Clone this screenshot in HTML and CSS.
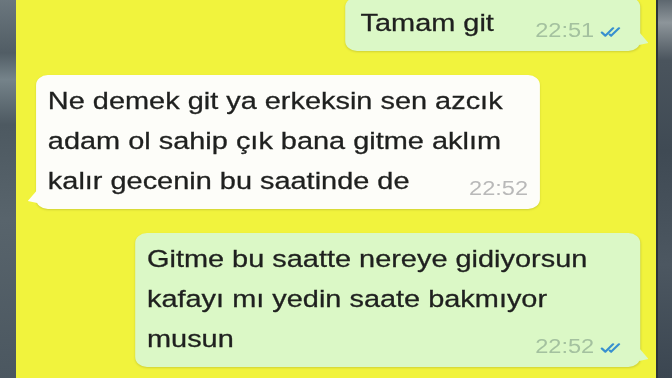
FILE: index.html
```html
<!DOCTYPE html>
<html>
<head>
    <title>Sohbet</title>
    <meta charset="UTF-8">
    <link rel="stylesheet" href="styles.css">
</head>
<body>
    <div class="screen">
        <div class="edge edge-left"></div>

        <div class="chat-area">
            <div class="chat">
                <div class="bubble out short">
                    <div class="row">
                        <span class="text">Tamam git</span>
                        <span class="meta">
                            <span class="time">22:51</span>
                            <svg class="ticks" viewBox="0 0 20 10" width="20" height="10">
                                <path d="M1.5 5.5l3 3.2L11 1.2M8.2 7.6l1.2 1.1L16 1.2"/>
                            </svg>
                        </span>
                    </div>
                </div>

                <div class="bubble in">
                    <div class="line">Ne demek git ya erkeksin sen azcık</div>
                    <div class="line">adam ol sahip çık bana gitme aklım</div>
                    <div class="row">
                        <span class="text">kalır gecenin bu saatinde de</span>
                        <span class="meta">
                            <span class="time">22:52</span>
                        </span>
                    </div>
                </div>

                <div class="bubble out long">
                    <div class="line">Gitme bu saatte nereye gidiyorsun</div>
                    <div class="line">kafayı mı yedin saate bakmıyor</div>
                    <div class="row">
                        <span class="text">musun</span>
                        <span class="meta">
                            <span class="time">22:52</span>
                            <svg class="ticks" viewBox="0 0 20 10" width="20" height="10">
                                <path d="M1.5 5.5l3 3.2L11 1.2M8.2 7.6l1.2 1.1L16 1.2"/>
                            </svg>
                        </span>
                    </div>
                </div>
            </div>
        </div>

        <div class="edge edge-right"></div>
    </div>
</body>
</html>
```

FILE: styles.css
```css
body {
    margin: 0;
    overflow: hidden;
    font-family: "Liberation Sans", Arial, sans-serif;
}
.screen {
    display: flex;
    width: 672px;
    height: 378px;
    overflow: hidden;
}
.edge {
    flex: none;
    width: 16px;
}
.edge-left {
    background: linear-gradient(180deg, #6b777e 0%, #515d65 14%, #75838a 21%, #4d5961 33%, #58646c 58%, #4b5760 100%);
}
.edge-right {
    border-left: 2px solid #2c333a;
    width: 14px;
    background: linear-gradient(180deg, #5d676f 0%, #8d959a 6%, #4a545d 16%, #3f4a54 40%, #4c5761 70%, #3b4651 100%);
}
.chat-area {
    flex: 1;
    background: #f1f33d;
    overflow: hidden;
}

.chat {
    width: 542px;
    margin-top: -3px;
    display: flex;
    flex-direction: column;
    gap: 24px;
    transform: scaleX(1.18);
    transform-origin: 0 0;
    filter: blur(0.35px);
}
.bubble {
    position: relative;
    box-sizing: border-box;
    padding: 6px 10px 8px 10px;
    border-radius: 10px;
    font-size: 24.5px;
    line-height: 40px;
    color: #1f201f;
    -webkit-text-stroke: 0.3px #1f201f;
    white-space: nowrap;
    box-shadow: 0 1px 2px rgba(0,0,0,0.14);
}
.bubble::after {
    content: "";
    position: absolute;
    bottom: 6px;
    width: 8px;
    height: 13px;
    background: inherit;
}
.bubble.in {
    align-self: flex-start;
    margin-left: 17px;
    width: 427px;
    background: #fdfdf9;
}
.bubble.in::after {
    left: -7px;
    clip-path: polygon(100% 0, 0 85%, 100% 100%);
}
.bubble.out {
    align-self: flex-end;
    margin-right: 13px;
    padding-right: 14px;
    background: #dbf8c6;
}
.bubble.out::after {
    right: -7px;
    clip-path: polygon(0 0, 100% 85%, 0 100%);
}
.bubble.short {
    width: 250px;
    padding-left: 13px;
}
.bubble.long {
    width: 428px;
}
.row {
    display: flex;
    justify-content: space-between;
    align-items: flex-end;
}
.meta {
    display: flex;
    align-items: baseline;
    gap: 5px;
    margin-bottom: 3px;
    font-size: 20px;
    line-height: 20px;
    -webkit-text-stroke: 0;
}
.bubble.in .time {
    color: #b9b9b9;
}
.bubble.out .time {
    color: #a4c19f;
}
.ticks {
    fill: none;
    stroke: #3890cf;
    stroke-width: 2;
    stroke-linecap: round;
    stroke-linejoin: round;
}
```
